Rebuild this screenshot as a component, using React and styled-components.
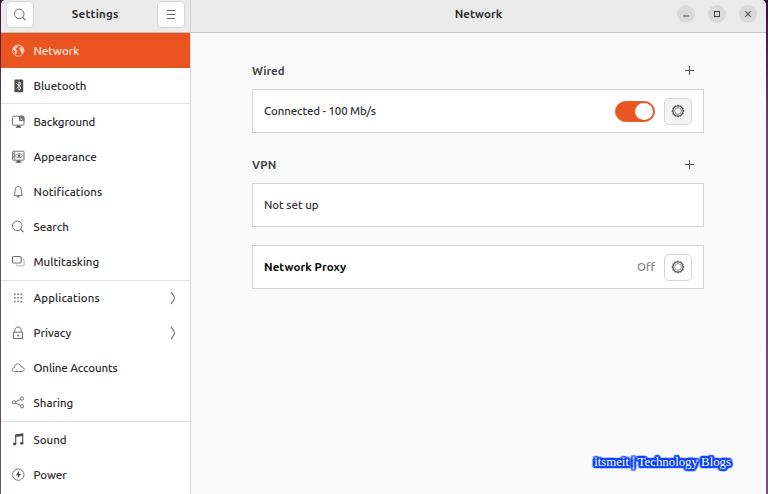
import React from "react";
import styled, { createGlobalStyle } from "styled-components";

const GlobalStyle = createGlobalStyle`
  * { box-sizing: border-box; }
  body { margin: 0; overflow: hidden; background: #3c1230; }
  svg { display: block; flex: none; }
  button { padding: 0; font: inherit; color: inherit; }
`;

const Window = styled.div`
  width: 768px;
  height: 494px;
  padding: 0 2px 0 1px;
  background: linear-gradient(#38122a, #6b4560 25%, #79506c);
  font-family: Ubuntu, "Noto Sans", sans-serif;
  font-size: 12px;
  color: #303030;
  overflow: hidden;
`;

const Frame = styled.div`
  display: grid;
  grid-template-columns: 190px 1fr;
  grid-template-rows: 33px 461px;
  height: 494px;
  border-radius: 5px 5px 0 0;
  overflow: hidden;
  background: #fafafa;
`;

const SideHeader = styled.header`
  display: flex;
  align-items: flex-start;
  justify-content: space-between;
  padding: 1px 5px 0 4.5px;
  background: #ebebeb;
  border-right: 1px solid #d2d2d2;
  border-bottom: 1px solid #bfbfbf;
`;

const MainHeader = styled.header`
  display: grid;
  grid-template-columns: 1fr auto 1fr;
  align-items: start;
  padding: 0 9px;
  background: #ebebeb;
  border-bottom: 1px solid #c9c9c9;
`;

const Label = styled.span`
  font-size: ${(p) => p.$size || 11.5}px;
  font-weight: ${(p) => (p.$bold ? 700 : 500)};
  letter-spacing: ${(p) => p.$spacing || 0}px;
  color: ${(p) => p.$color || "inherit"};
  white-space: nowrap;
`;

const HeaderTitle = styled(Label)`
  line-height: ${(p) => p.$line || 27}px;
`;

const SquareButton = styled.button`
  display: flex;
  align-items: center;
  justify-content: center;
  width: 28px;
  height: 27px;
  border: 1px solid #d6d6d6;
  border-radius: 5px;
  background: ${(p) => (p.$muted ? "#f4f4f4" : "#fff")};
`;

const WindowControls = styled.div`
  display: flex;
  justify-content: flex-end;
  gap: 13px;
  padding-top: 5px;
`;

const RoundButton = styled.button`
  display: flex;
  align-items: center;
  justify-content: center;
  width: 18px;
  height: 18px;
  border: 0;
  border-radius: 50%;
  background: #dadada;
`;

const Sidebar = styled.nav`
  background: #fff;
  border-right: 1px solid #d8d8d8;
  overflow: hidden;
`;

const Group = styled.div`
  display: grid;
  grid-auto-rows: ${(p) => p.$row}px;
  border-bottom: 1px solid #e2e2e2;

  &:last-child { border-bottom: 0; }
`;

const Item = styled.div`
  display: flex;
  align-items: center;
  padding: 0 14px 0 9px;
  gap: 7.5px;
  background: ${(p) => (p.$active ? "#e95420" : "transparent")};
  color: ${(p) => (p.$active ? "#ffe6dc" : "#2b2b2b")};

  & > ${Label} { flex: 1; padding-bottom: 1px; }
`;

const Content = styled.main`
  display: flex;
  flex-direction: column;
  padding: 28px 62px 0 61px;
`;

const SectionHead = styled.div`
  display: flex;
  align-items: center;
  justify-content: space-between;
  height: 19px;
  margin-top: ${(p) => p.$top || 0}px;
  margin-bottom: 9px;
  padding-right: 10px;
  color: #454545;

  & > ${Label} { padding-bottom: 1px; }
`;

const Card = styled.section`
  display: flex;
  align-items: center;
  height: 44px;
  margin-top: ${(p) => p.$top || 0}px;
  padding: 0 11px;
  gap: 9px;
  background: #fff;
  border: 1px solid #d3d3d3;

  & > ${Label} { padding-bottom: 1px; }
  & > ${Label}:first-child { flex: 1; }
`;

const Switch = styled.div`
  display: flex;
  justify-content: flex-end;
  width: 40px;
  height: 21px;
  padding: 1px;
  border-radius: 11px;
  background: #e95420;
  border: 1px solid #e2622f;
`;

const Knob = styled.div`
  width: 18px;
  height: 17px;
  border-radius: 50%;
  background: #fff;
`;

/* Sixteen shadows on a circle give the text a rounded outline. */
const OUTLINE = Array.from({ length: 16 }, (_, i) => {
  const a = (i * Math.PI) / 8;
  return `${(Math.cos(a) * 2.2).toFixed(2)}px ${(Math.sin(a) * 2.2).toFixed(2)}px 1px #0a40f5`;
}).join(", ");

const Watermark = styled.footer`
  align-self: flex-end;
  margin: 164px -27px 0 0;
  font-family: "Liberation Serif", serif;
  font-size: 12.8px;
  line-height: 18px;
  letter-spacing: ${(p) => p.$spacing}px;
  color: #fff;
  text-shadow: ${OUTLINE};
  white-space: nowrap;
`;

const Icon = ({ children, size = 16, width = 1, color = "#666" }) => (
  <svg width={size} height={size} viewBox="0 0 16 16" fill="none" stroke={color} strokeWidth={width}>
    {children}
  </svg>
);

const SearchIcon = () => (
  <Icon color="#707070"><circle cx="7.2" cy="6.9" r="4.8" /><path d="M10.7 10.5l2.9 2.6" strokeWidth="1.2" /></Icon>
);

const GEAR_TEETH = Array.from({ length: 12 }, (_, i) => i * 30);

const GearIcon = () => (
  <Icon color="#555">
    <circle cx="8" cy="8" r="5.1" strokeWidth="1.2" />
    <circle cx="8" cy="8" r="3.4" stroke="#777" strokeWidth="0.8" />
    {GEAR_TEETH.map((a) => (
      <path key={a} d="M8 1.7V3" strokeWidth="1.4" transform={`rotate(${a} 8 8)`} />
    ))}
  </Icon>
);

const PlusIcon = () => (
  <svg width="9" height="9" viewBox="0 0 9 9" stroke="#555" strokeWidth="1">
    <path d="M4.5 0v9M0 4.5h9" />
  </svg>
);

const Chevron = () => (
  <svg width="6" height="14" viewBox="0 0 6 14" fill="none" stroke="#777" strokeWidth="1.1">
    <path d="M1 1Q3 3 4.7 7Q3 11 1 13" />
  </svg>
);

const icons = {
  network: (
    <Icon color="#ffd0bd">
      <circle cx="8.2" cy="7.6" r="5.6" strokeWidth="0.9" />
      <path d="M3.2 4.2L5.8 2.4L8 2.8L7.3 4.6L5.4 5.8L7.4 7.8L6.7 9.6L5.9 12.2L4.8 9.8L4.5 7.8L2.9 6.5Z M9.8 3.8L11.7 3.4L13.3 5.8L13.4 8.8L12 11.2L11 8.8L9.5 7Z" fill="#ffd0bd" stroke="none" />
    </Icon>
  ),
  bluetooth: (
    <Icon>
      <rect x="4.4" y="1.6" width="8.8" height="12.6" rx="1" fill="#4c4c4c" stroke="none" />
      <path d="M6.5 5.4l4.6 4.7-2.2 2.1V3.7l2.2 2.1-4.6 4.7" stroke="#f5f5f5" strokeWidth="0.9" />
    </Icon>
  ),
  background: (
    <Icon color="#747474">
      <rect x="2.5" y="2.2" width="11.5" height="9" rx="1.2" />
      <path d="M9.5 2.2V6.5H14V3L13 2.2Z" fill="#747474" />
      <path d="M10.6 5.8V3.8L12.6 5.8Z" fill="#fff" stroke="none" />
      <path d="M7 11.5h3v1h1.2v1.2H5.8v-1.2H7z" fill="#555" stroke="none" />
    </Icon>
  ),
  appearance: (
    <Icon color="#707070">
      <rect x="2.5" y="2.2" width="11.5" height="9" rx=".8" />
      <path d="M4.7 2.7v8M2.8 5h2M2.8 7.7h2" strokeWidth="0.9" />
      <path d="M5.2 6.7C6.8 4 11 4 12.8 6.7C11 9.4 6.8 9.4 5.2 6.7Z" strokeWidth="0.8" />
      <circle cx="9" cy="6.7" r="1.2" fill="#555" stroke="none" />
      <path d="M7 11.5h3v1h1.4v1.2H5.6v-1.2H7z" fill="#555" stroke="none" />
    </Icon>
  ),
  notifications: (
    <Icon color="#747474">
      <path d="M4 11C5.4 9.5 4.8 7.2 5.3 4.9C5.8 1.5 10.6 1.5 11.1 4.9C11.6 7.2 11 9.5 12.4 11V11.4H4Z" />
      <path d="M6.8 12.7h2.8" strokeWidth="1.4" />
    </Icon>
  ),
  search: <SearchIcon />,
  multitasking: (
    <Icon color="#707070">
      <rect x="2.5" y="2.5" width="8.7" height="6.5" rx="1.2" strokeWidth="1.1" />
      <path d="M12.5 5.4h.6q1 0 1 1v4.5q0 1-1 1H7.4q-1 0-1-1v-.4" stroke="#b0b0b0" />
    </Icon>
  ),
  applications: (
    <Icon width={1.5} color="#666">
      <path d="M4 4.2h8.8M4 7.8h8.8M4 11.4h8.8" strokeDasharray="1.5 1.8" />
    </Icon>
  ),
  privacy: (
    <Icon color="#747474">
      <rect x="3.5" y="7.2" width="9" height="6.3" />
      <path d="M4.8 7.2V5.2C4.8 .9 11.2 .9 11.2 5.2V7.2" />
      <rect x="7.3" y="9.7" width="1.5" height="1.7" fill="#555" stroke="none" />
    </Icon>
  ),
  accounts: (
    <Icon color="#747474">
      <path d="M4.6 11.6C1.5 11.6 1.5 7.9 4.3 7.8C4.5 2.8 10.2 2.6 11 6.8C15 6.8 15 11.5 12 11.6Z" />
    </Icon>
  ),
  sharing: (
    <Icon color="#747474">
      <path d="M5.4 6.9l5-2.5M5.4 7.8l5 2.7" />
      <circle cx="4" cy="7.3" r="1.6" /><circle cx="12" cy="3.6" r="1.6" /><circle cx="12" cy="11.3" r="1.6" />
    </Icon>
  ),
  sound: (
    <Icon color="#4d4d4d">
      <path d="M5.7 12V2.9L12.7 1.9V11" strokeWidth="1.1" />
      <path d="M5.2 2.7l8-1v2.3l-8 1z" fill="#4d4d4d" stroke="none" />
      <ellipse cx="4.7" cy="12" rx="1.7" ry="1.4" fill="#4d4d4d" stroke="none" />
      <ellipse cx="11.7" cy="11.3" rx="1.7" ry="1.4" fill="#4d4d4d" stroke="none" />
    </Icon>
  ),
  power: (
    <Icon color="#747474">
      <circle cx="8.3" cy="7.6" r="5.7" />
      <path d="M9.2 3.5L5.9 8.2H8L7.5 11.7L10.8 7H8.8Z" fill="#444" stroke="none" />
    </Icon>
  ),
};

const groups = [
  { row: 35, items: [["network", "Network", 0], ["bluetooth", "Bluetooth", -0.05]] },
  { row: 35.2, items: [["background", "Background", -0.1], ["appearance", "Appearance", 0.04], ["notifications", "Notifications", 0.02], ["search", "Search", 0], ["multitasking", "Multitasking", -0.02]] },
  { row: 35, items: [["applications", "Applications", 0.08, true], ["privacy", "Privacy", 0, true], ["accounts", "Online Accounts", -0.12], ["sharing", "Sharing", 0]] },
  { row: 35.2, items: [["sound", "Sound", 0], ["power", "Power", -0.1]] },
];

export default function App() {
  return (
    <>
      <GlobalStyle />
      <Window>
        <Frame>
          <SideHeader>
            <SquareButton aria-label="Search"><SearchIcon /></SquareButton>
            <HeaderTitle $bold $spacing={0.2} $line={25}>Settings</HeaderTitle>
            <SquareButton aria-label="Menu">
              <Icon><path d="M4 3.5h8M4 7.5h8M4 11.5h8" /></Icon>
            </SquareButton>
          </SideHeader>
          <MainHeader>
            <span />
            <HeaderTitle $bold $spacing={0.05}>Network</HeaderTitle>
            <WindowControls>
              <RoundButton aria-label="Minimize"><Icon width={1.4} color="#777"><path d="M5 10h6" /></Icon></RoundButton>
              <RoundButton aria-label="Maximize"><Icon width={1} color="#444"><rect x="5.5" y="5.5" width="5" height="5" /></Icon></RoundButton>
              <RoundButton aria-label="Close"><Icon width={1.2} color="#555"><path d="M5.2 5.2l5.6 5.6M10.8 5.2l-5.6 5.6" /></Icon></RoundButton>
            </WindowControls>
          </MainHeader>
          <Sidebar>
            {groups.map((g, i) => (
              <Group key={i} $row={g.row}>
                {g.items.map(([id, text, spacing, more]) => (
                  <Item key={id} $active={id === "network"}>
                    {icons[id]}
                    <Label $spacing={spacing}>{text}</Label>
                    {more && <Chevron />}
                  </Item>
                ))}
              </Group>
            ))}
          </Sidebar>
          <Content>
            <SectionHead><Label $bold>Wired</Label><PlusIcon /></SectionHead>
            <Card>
              <Label $spacing={-0.12}>Connected - 100 Mb/s</Label>
              <Switch role="switch" aria-checked="true"><Knob /></Switch>
              <SquareButton $muted aria-label="Wired options"><GearIcon /></SquareButton>
            </Card>
            <SectionHead $top={22}><Label $bold $spacing={0.15}>VPN</Label><PlusIcon /></SectionHead>
            <Card><Label $spacing={-0.05}>Not set up</Label></Card>
            <Card $top={18}>
              <Label $bold $spacing={0.08} $color="#000">Network Proxy</Label>
              <Label $color="#868686">Off</Label>
              <SquareButton aria-label="Proxy options"><GearIcon /></SquareButton>
            </Card>
            <Watermark $spacing={0}>itsmeit | Technology Blogs</Watermark>
          </Content>
        </Frame>
      </Window>
    </>
  );
}
